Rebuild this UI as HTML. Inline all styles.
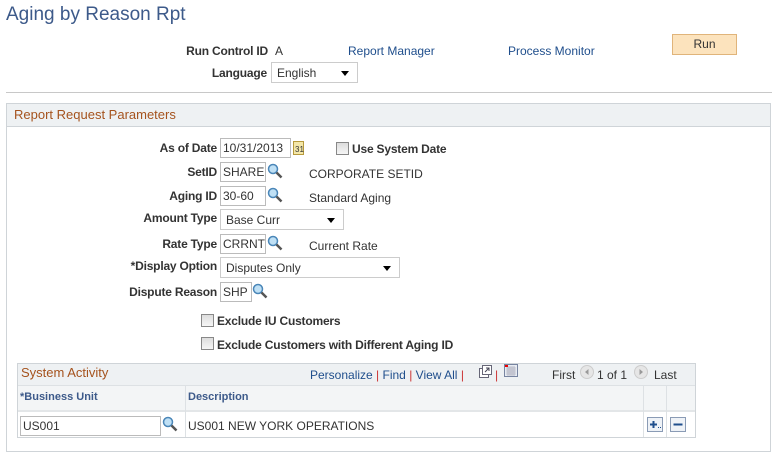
<!DOCTYPE html>
<html><head><style>
body{margin:0;width:777px;height:460px;background:#fff;font-family:"Liberation Sans",Arial,sans-serif;font-size:12px;color:#333;position:relative;overflow:hidden}
.a{position:absolute;white-space:nowrap}
.lbl{position:absolute;font-weight:bold;color:#333;text-align:right;white-space:nowrap;letter-spacing:-0.2px}
.b{font-weight:bold;letter-spacing:-0.2px}
.lnk{color:#1f4e8c}
.inp{position:absolute;border:1px solid #bbb;background:#fff;box-sizing:border-box;height:20px;padding:2px 2px;font-size:12px;white-space:nowrap;overflow:hidden}
.sel{position:absolute;border:1px solid #ccc;background:#fff;box-sizing:border-box;height:21px;padding:3px 5px;white-space:nowrap}
.sel:after{content:"";position:absolute;right:8px;top:8px;border-left:4px solid transparent;border-right:4px solid transparent;border-top:5px solid #000}
.cb{position:absolute;width:11px;height:11px;border:1px solid #888;background:linear-gradient(#ddd,#f6f6f6)}
.mg{position:absolute;width:16px;height:16px}
</style></head><body>
<div class="a" style="left:6px;top:4px;font-size:19px;color:#3d5a8a">Aging by Reason Rpt</div>
<div class="lbl" style="right:509px;top:44px">Run Control ID</div>
<div class="a" style="left:275px;top:44px">A</div>
<div class="a lnk" style="left:348px;top:44px">Report Manager</div>
<div class="a lnk" style="left:508px;top:44px">Process Monitor</div>
<div class="a" style="left:672px;top:34px;width:65px;height:21px;box-sizing:border-box;border:1px solid #e0b47a;background:#fce3bd;text-align:center;line-height:19px">Run</div>
<div class="lbl" style="right:510px;top:66px">Language</div>
<div class="sel" style="left:271px;top:62px;width:87px">English</div>
<div class="a" style="left:6px;top:92px;width:766px;height:1px;background:#c8c8c8"></div>

<div class="a" style="left:6px;top:103px;width:765px;height:349px;border:1px solid #cfd4d8;box-sizing:border-box"></div>
<div class="a" style="left:7px;top:104px;width:763px;height:22px;background:#eef1f3;border-bottom:1px solid #cfd4d8"></div>
<div class="a" style="left:14px;top:107px;font-size:13px;color:#a5531e">Report Request Parameters</div>

<div class="lbl" style="right:560px;top:141px">As of Date</div>
<div class="inp" style="left:220px;top:138px;width:71px">10/31/2013</div>
<svg class="a" style="left:293px;top:141px" width="11" height="14"><rect x=".5" y=".5" width="10" height="13" fill="#f4e7a8" stroke="#b79a3c"/><text x="2" y="11" font-size="8" font-family="Liberation Sans" fill="#333">31</text></svg>
<div class="cb" style="left:336px;top:142px"></div>
<div class="a b" style="left:352px;top:142px">Use System Date</div>

<div class="lbl" style="right:560px;top:165px">SetID</div>
<div class="inp" style="left:220px;top:162px;width:46px">SHARE</div>
<svg class="mg" style="left:267px;top:163px" viewBox="0 0 16 16"><circle cx="6" cy="6" r="4.5" fill="#bfe0f5" stroke="#4a86b8" stroke-width="1.5"/><path d="M9.5 9.5l5 5" stroke="#555" stroke-width="2.5"/></svg>
<div class="a" style="left:309px;top:167px">CORPORATE SETID</div>

<div class="lbl" style="right:560px;top:189px">Aging ID</div>
<div class="inp" style="left:220px;top:186px;width:46px">30-60</div>
<svg class="mg" style="left:267px;top:187px" viewBox="0 0 16 16"><circle cx="6" cy="6" r="4.5" fill="#bfe0f5" stroke="#4a86b8" stroke-width="1.5"/><path d="M9.5 9.5l5 5" stroke="#555" stroke-width="2.5"/></svg>
<div class="a" style="left:309px;top:191px">Standard Aging</div>

<div class="lbl" style="right:560px;top:211px">Amount Type</div>
<div class="sel" style="left:220px;top:209px;width:124px">Base Curr</div>

<div class="lbl" style="right:560px;top:237px">Rate Type</div>
<div class="inp" style="left:220px;top:234px;width:46px">CRRNT</div>
<svg class="mg" style="left:267px;top:235px" viewBox="0 0 16 16"><circle cx="6" cy="6" r="4.5" fill="#bfe0f5" stroke="#4a86b8" stroke-width="1.5"/><path d="M9.5 9.5l5 5" stroke="#555" stroke-width="2.5"/></svg>
<div class="a" style="left:309px;top:239px">Current Rate</div>

<div class="lbl" style="right:560px;top:259px">*Display Option</div>
<div class="sel" style="left:220px;top:257px;width:180px">Disputes Only</div>

<div class="lbl" style="right:560px;top:285px">Dispute Reason</div>
<div class="inp" style="left:220px;top:282px;width:32px">SHP</div>
<svg class="mg" style="left:252px;top:283px" viewBox="0 0 16 16"><circle cx="6" cy="6" r="4.5" fill="#bfe0f5" stroke="#4a86b8" stroke-width="1.5"/><path d="M9.5 9.5l5 5" stroke="#555" stroke-width="2.5"/></svg>

<div class="cb" style="left:201px;top:314px"></div>
<div class="a b" style="left:217px;top:314px">Exclude IU Customers</div>
<div class="cb" style="left:201px;top:337px"></div>
<div class="a b" style="left:217px;top:338px">Exclude Customers with Different Aging ID</div>

<div class="a" style="left:17px;top:363px;width:679px;height:75px;border:1px solid #cfd4d8;box-sizing:border-box"></div>
<div class="a" style="left:18px;top:364px;width:677px;height:21px;background:#eef1f3;border-bottom:1px solid #dde1e4"></div>
<div class="a" style="left:21px;top:365px;font-size:13px;color:#a5531e">System Activity</div>
<div class="a" style="left:310px;top:368px"><span class="lnk">Personalize</span> <span style="color:#c33">|</span> <span class="lnk">Find</span> <span style="color:#c33">|</span> <span class="lnk">View All</span> <span style="color:#c33">|</span></div>
<svg class="a" style="left:478px;top:365px" width="14" height="13"><rect x="1.5" y="3.5" width="9" height="9" fill="#fff" stroke="#667"/><rect x="4.5" y=".5" width="9" height="9" fill="#fff" stroke="#667"/><path d="M7 7l4-4M8 3h3v3" stroke="#445" fill="none"/></svg>
<span class="a" style="left:495px;top:368px;color:#c33">|</span>
<svg class="a" style="left:504px;top:364px" width="14" height="13"><rect x=".5" y=".5" width="13" height="12" fill="#e8ecf3" stroke="#7784a0"/><path d="M2 4h10M2 6h10M2 8h10M2 10h10M4 2v10M6 2v10M8 2v10M10 2v10" stroke="#99a" stroke-width=".6"/><rect x="1" y="1" width="3" height="2" fill="#e00"/></svg>
<div class="a" style="left:552px;top:368px">First</div>
<svg class="a" style="left:580px;top:365px" width="14" height="14"><circle cx="7" cy="7" r="6.5" fill="#e6e6e6" stroke="#ccc"/><path d="M8.5 4v6L5 7z" fill="#999"/></svg>
<div class="a" style="left:597px;top:368px">1 of 1</div>
<svg class="a" style="left:634px;top:365px" width="14" height="14"><circle cx="7" cy="7" r="6.5" fill="#e6e6e6" stroke="#ccc"/><path d="M5.5 4v6L9 7z" fill="#999"/></svg>
<div class="a" style="left:654px;top:368px">Last</div>

<div class="a" style="left:18px;top:386px;width:677px;height:24px;background:#f3f5f6;border-bottom:2px solid #e3e6e8"></div>
<div class="a" style="left:185px;top:386px;width:1px;height:51px;background:#dde1e4"></div>
<div class="a" style="left:643px;top:386px;width:1px;height:51px;background:#dde1e4"></div>
<div class="a" style="left:666px;top:386px;width:1px;height:51px;background:#dde1e4"></div>
<div class="a" style="left:20px;top:391px;font-weight:bold;color:#3d5a8a;font-size:11px">*Business Unit</div>
<div class="a" style="left:188px;top:391px;font-weight:bold;color:#3d5a8a;font-size:11px">Description</div>
<div class="inp" style="left:20px;top:416px;width:141px">US001</div>
<svg class="mg" style="left:162px;top:416px" viewBox="0 0 16 16"><circle cx="6" cy="6" r="4.5" fill="#bfe0f5" stroke="#4a86b8" stroke-width="1.5"/><path d="M9.5 9.5l5 5" stroke="#555" stroke-width="2.5"/></svg>
<div class="a" style="left:188px;top:419px">US001 NEW YORK OPERATIONS</div>
<svg class="a" style="left:647px;top:417px" width="16" height="15"><rect x=".5" y=".5" width="15" height="14" fill="#eef2f7" stroke="#8a9bb5"/><path d="M3 7.5h7M6.5 4v7" stroke="#1f4e8c" stroke-width="2"/><rect x="11" y="10" width="1" height="1" fill="#1f4e8c"/><rect x="13" y="10" width="1" height="1" fill="#1f4e8c"/></svg>
<svg class="a" style="left:670px;top:417px" width="16" height="15"><rect x=".5" y=".5" width="15" height="14" fill="#eef2f7" stroke="#8a9bb5"/><path d="M3.5 7.5h9" stroke="#1f4e8c" stroke-width="2"/></svg>
</body></html>
